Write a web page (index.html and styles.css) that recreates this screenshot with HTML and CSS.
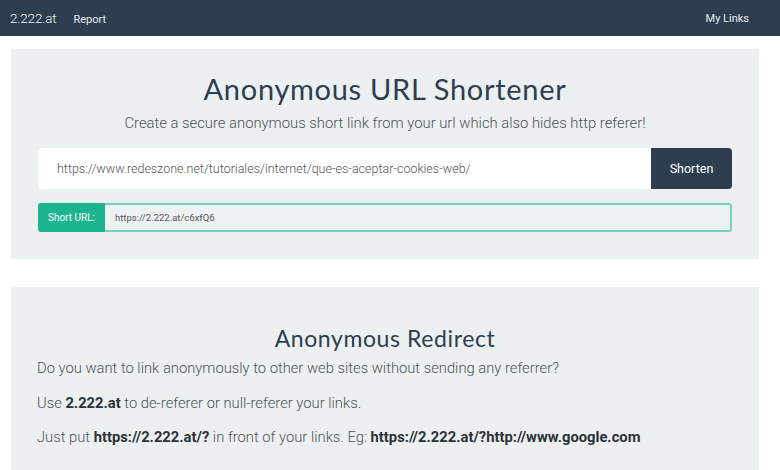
FILE: index.html
```html
<!DOCTYPE html>
<html>
<head>
<meta charset="utf-8">
<link rel="stylesheet" href="styles.css">
</head>
<body>
<nav class="navbar">
  <div class="nav-left">
    <span class="brand">2.222.at</span>
    <span class="nav-link">Report</span>
  </div>
  <span class="nav-link">My Links</span>
</nav>
<main class="page">
  <section class="panel panel-top">
    <h1 class="title">Anonymous URL Shortener</h1>
    <p class="lead">Create a secure anonymous short link from your url which also hides http referer!</p>
    <div class="shorten-row">
      <div class="url-input">https://www.redeszone.net/tutoriales/internet/que-es-aceptar-cookies-web/</div>
      <div class="btn-shorten">Shorten</div>
    </div>
    <div class="result-row">
      <div class="result-label">Short URL:</div>
      <div class="result-value">https://2.222.at/c6xfQ6</div>
    </div>
  </section>
  <section class="panel panel-bottom">
    <h2 class="title2">Anonymous Redirect</h2>
    <p class="text">Do you want to link anonymously to other web sites without sending any referrer?</p>
    <p class="text">Use <b>2.222.at</b> to de-referer or null-referer your links.</p>
    <p class="text">Just put <b>https://2.222.at/?</b> in front of your links. Eg: <b>https://2.222.at/?http://www.google.com</b></p>
  </section>
</main>
</body>
</html>
```
FILE: styles.css
```css
* { box-sizing: border-box; }
html, body { margin: 0; padding: 0; background: #fff; overflow: hidden; }
body { font-family: Roboto, "Liberation Sans", sans-serif; color: #555b61; }

.navbar {
  height: 36px;
  background: #2c3e50;
  display: flex;
  align-items: center;
  justify-content: space-between;
  padding: 0 31px 0 10px;
  color: #e8ecef;
}
.nav-left { display: flex; align-items: baseline; gap: 17px; }
.brand { font-size: 13.5px; font-weight: 300; letter-spacing: -0.2px; }
.nav-link { font-size: 11px; }

.page {
  width: 748px;
  margin-left: 11px;
  padding-top: 13px;
  display: flex;
  flex-direction: column;
  gap: 28px;
}
.panel { background: #ecf0f1; }
.panel-top { height: 210px; padding: 23px 27px 0 27px; }
.title {
  margin: 0;
  text-align: center;
  font-family: Lato, sans-serif;
  font-weight: 400;
  font-size: 29px;
  letter-spacing: 0.7px;
  color: #2c3e50;
  line-height: 34px;
}
.lead {
  margin: 7px 0 0;
  text-align: center;
  font-size: 14.8px;
  font-weight: 300;
  color: #4d5358;
  line-height: 20px;
}
.shorten-row {
  margin-top: 15px;
  display: flex;
  height: 41px;
}
.url-input {
  flex: 1;
  background: #fff;
  border-radius: 4px 0 0 4px;
  padding-left: 19px;
  display: flex;
  align-items: center;
  font-size: 12.5px;
  font-weight: 300;
  color: #555;
}
.btn-shorten {
  width: 81px;
  background: #2c3e50;
  color: #fff;
  border-radius: 0 4px 4px 0;
  display: flex;
  align-items: center;
  justify-content: center;
  font-size: 12.5px;
}
.result-row {
  margin-top: 14px;
  display: flex;
  height: 29px;
}
.result-label {
  width: 67px;
  background: #1db58f;
  color: #fff;
  font-size: 10px;
  border-radius: 3px 0 0 3px;
  display: flex;
  align-items: center;
  justify-content: center;
}
.result-value {
  flex: 1;
  background: #edf2f2;
  border: 2px solid #74d1bb;
  border-left: none;
  border-radius: 0 3px 3px 0;
  font-size: 9.5px;
  color: #555;
  display: flex;
  align-items: center;
  padding-left: 10px;
}

.panel-bottom { height: 200px; padding: 37px 26px 0 26px; }
.title2 {
  margin: 0 0 6px;
  text-align: center;
  font-family: Lato, sans-serif;
  font-weight: 400;
  font-size: 23px;
  letter-spacing: 0.6px;
  color: #2c3e50;
  line-height: 28px;
}
.text {
  margin: 0 0 14.5px;
  font-size: 14.75px;
  font-weight: 300;
  color: #4d5358;
  line-height: 20px;
}
.text b { font-weight: 700; color: #2c3338; }
```
